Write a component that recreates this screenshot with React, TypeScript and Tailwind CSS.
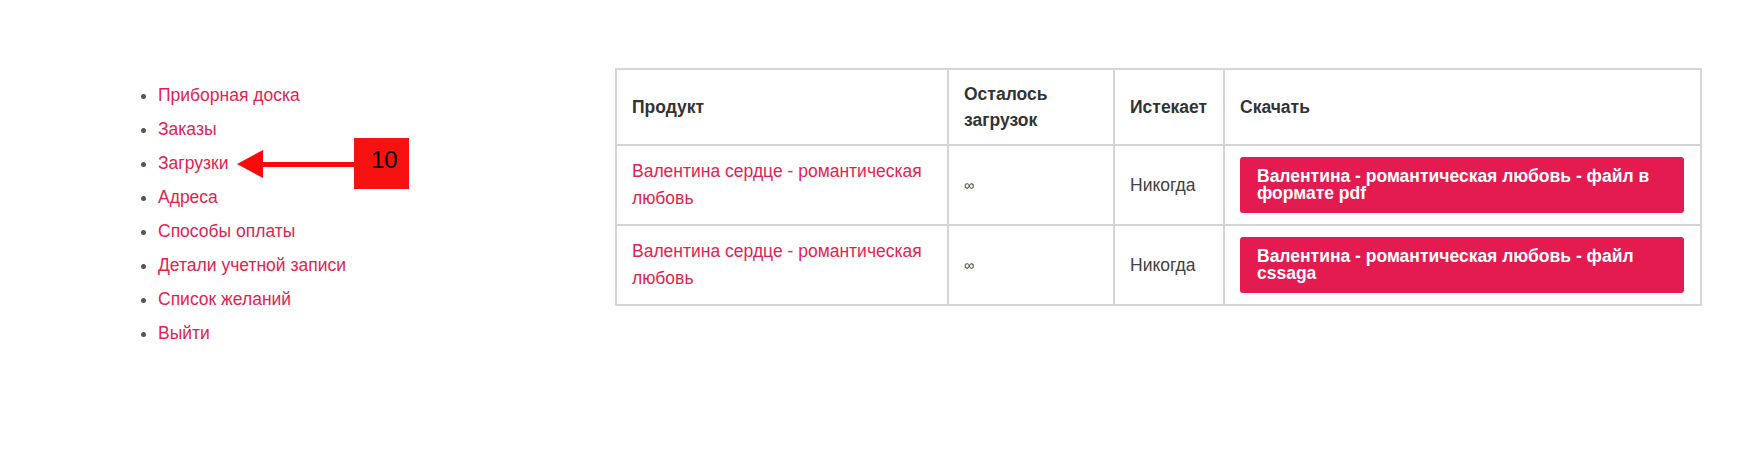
const menu = [
  'Приборная доска',
  'Заказы',
  'Загрузки',
  'Адреса',
  'Способы оплаты',
  'Детали учетной записи',
  'Список желаний',
  'Выйти',
];

const downloads = [
  {
    product: 'Валентина сердце - романтическая любовь',
    left: '∞',
    expires: 'Никогда',
    file: 'Валентина - романтическая любовь - файл в формате pdf',
  },
  {
    product: 'Валентина сердце - романтическая любовь',
    left: '∞',
    expires: 'Никогда',
    file: 'Валентина - романтическая любовь - файл cssaga',
  },
];

function Annotation() {
  return (
    <div className="absolute left-[237px] top-[138px] flex items-start">
      <svg width="117" height="51" viewBox="0 0 117 51" className="block">
        <polygon points="0,26 26,12 26,40" fill="#fb0a0a" />
        <rect x="24" y="24" width="94" height="5" fill="#fb0a0a" />
      </svg>
      <div className="w-[55px] h-[51px] bg-[#f81111] text-black text-[24px] leading-none pt-[10px] pl-[17px]">
        10
      </div>
    </div>
  );
}

export default function App() {
  return (
    <div
      className="relative w-full h-[470px] bg-white"
      style={{ fontFamily: '"Liberation Sans", Arial, sans-serif' }}
    >
      <div className="flex items-start pt-[68px]">
        <nav className="w-[615px] shrink-0 pl-[158px] pt-[10px]">
          <ul className="list-disc text-[17.5px] leading-[34px] text-[#e3234f] marker:text-[#555]">
            {menu.map((item) => (
              <li key={item}>
                <a href="#" className="text-[#e3234f]">
                  {item}
                </a>
              </li>
            ))}
          </ul>
        </nav>

        <table className="table-fixed border-collapse w-[1085px] text-[17.5px] text-[#404040]">
          <colgroup>
            <col className="w-[332px]" />
            <col className="w-[166px]" />
            <col className="w-[110px]" />
            <col className="w-[477px]" />
          </colgroup>
          <thead>
            <tr className="text-left font-bold text-[#333]">
              <th className="border-2 border-[#d5d5d5] px-[15px] py-[11px] leading-[26px] align-middle">Продукт</th>
              <th className="border-2 border-[#d5d5d5] px-[15px] py-[11px] leading-[26px] align-middle">Осталось загрузок</th>
              <th className="border-2 border-[#d5d5d5] px-[15px] py-[11px] leading-[26px] align-middle">Истекает</th>
              <th className="border-2 border-[#d5d5d5] px-[15px] py-[11px] leading-[26px] align-middle">Скачать</th>
            </tr>
          </thead>
          <tbody>
            {downloads.map((row, i) => (
              <tr key={i}>
                <td className="border-2 border-[#d5d5d5] px-[15px] py-[12px] leading-[27px] align-middle">
                  <a href="#" className="text-[#e3234f]">
                    {row.product}
                  </a>
                </td>
                <td className="border-2 border-[#d5d5d5] px-[15px] leading-[26px] align-middle text-[14px]">{row.left}</td>
                <td className="border-2 border-[#d5d5d5] px-[15px] leading-[26px] align-middle">{row.expires}</td>
                <td className="border-2 border-[#d5d5d5] pl-[15px] pr-[16px] align-middle">
                  <a
                    href="#"
                    className="block rounded-[3px] bg-[#e31b50] pl-[17px] pr-[15px] py-[11px] text-[17.5px] font-bold leading-[17px] text-white"
                  >
                    {row.file}
                  </a>
                </td>
              </tr>
            ))}
          </tbody>
        </table>
      </div>
      <Annotation />
    </div>
  );
}
